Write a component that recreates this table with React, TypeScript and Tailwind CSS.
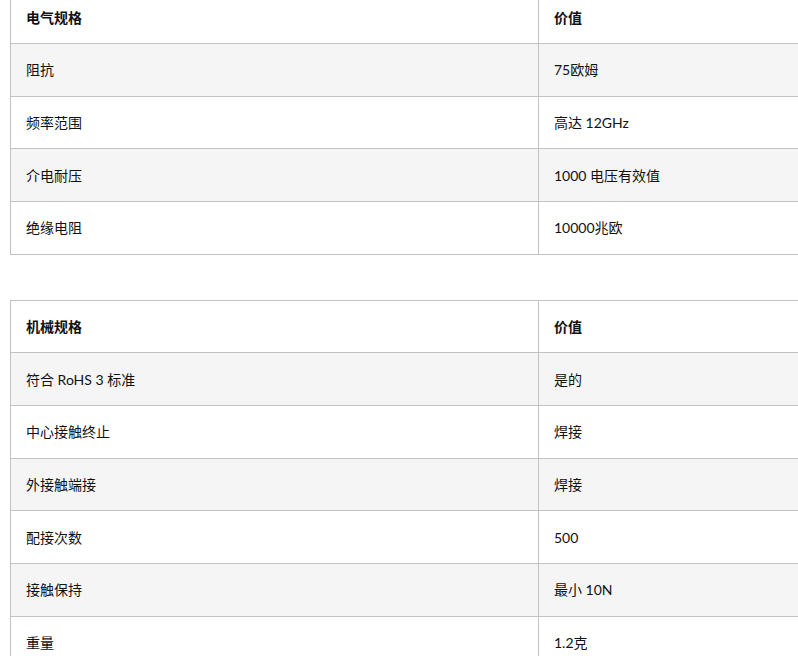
import React from "react";

type Table = { head: [string, string]; rows: [string, string][] };

const tables: Table[] = [
  {
    head: ["电气规格", "价值"],
    rows: [
      ["阻抗", "75欧姆"],
      ["频率范围", "高达 12GHz"],
      ["介电耐压", "1000 电压有效值"],
      ["绝缘电阻", "10000兆欧"],
    ],
  },
  {
    head: ["机械规格", "价值"],
    rows: [
      ["符合 RoHS 3 标准", "是的"],
      ["中心接触终止", "焊接"],
      ["外接触端接", "焊接"],
      ["配接次数", "500"],
      ["接触保持", "最小 10N"],
      ["重量", "1.2克"],
    ],
  },
];

function Row({ a, b, bold, gray }: { a: string; b: string; bold?: boolean; gray?: boolean }) {
  return (
    <div
      className={`grid grid-cols-[528px_1fr] h-[52.67px] border-b border-[#c2c2c2] ${gray ? "bg-[#f5f5f5]" : "bg-white"} ${bold ? "font-bold" : ""}`}
    >
      <div className="flex items-center px-[15px] border-r border-[#c2c2c2]">{a}</div>
      <div className="flex items-center px-[15px]">{b}</div>
    </div>
  );
}

export default function App() {
  return (
    <div
      className="w-[798px] h-[656px] overflow-hidden bg-white text-[14px] text-[#111]"
      style={{ fontFamily: 'Lato, "Noto Sans CJK SC", sans-serif' }}
    >
      <div className="flex flex-col gap-[45px] pl-[10px] -mt-[9.67px]">
        {tables.map((t, i) => (
          <div key={i} className="w-[1066px] border-l border-t border-[#c2c2c2]">
            <Row a={t.head[0]} b={t.head[1]} bold />
            {t.rows.map((r, j) => (
              <Row key={j} a={r[0]} b={r[1]} gray={j % 2 === 0} />
            ))}
          </div>
        ))}
      </div>
    </div>
  );
}
